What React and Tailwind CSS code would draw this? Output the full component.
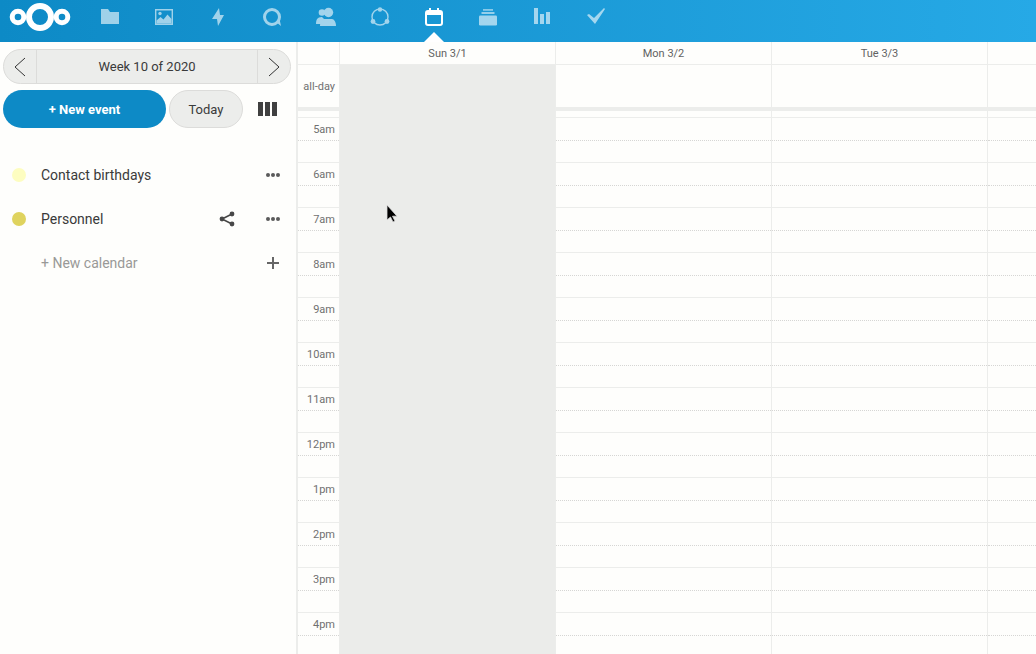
import React from "react";

function Ic({ children, active }) {
  return (
    <div className="w-[54px] h-[42px] pb-[8px] flex items-center justify-center relative">
      <svg width="24" height="24" viewBox="0 0 24 24" fill="#fff" className={active ? "" : "opacity-60"}>
        {children}
      </svg>
      {active && <div className="absolute left-[17px] bottom-0 w-0 h-0 border-l-[10px] border-r-[10px] border-b-[10px] border-l-transparent border-r-transparent border-b-white" />}
    </div>
  );
}

const hours = ["5am","6am","7am","8am","9am","10am","11am","12pm","1pm","2pm","3pm","4pm"];

function Slots({ label }) {
  return (
    <>
      <div className="h-[42px] shrink-0 pt-[2px] flex items-center justify-end pr-[4px] text-[11px] text-[#707070]">{label ? "all-day" : ""}</div>
      <div className="h-[4px] shrink-0 bg-[#ecedeb]" />
      <div className="h-[6px] shrink-0" />
    </>
  );
}

function Rows({ labels }) {
  return hours.map((h) => (
    <div key={h} className="h-[45px] shrink-0 border-t border-[#ecedeb]">
      <div className="h-[23px] border-b border-dotted border-[#d6d6d4] flex items-center justify-end pr-[4px] text-[11px] leading-none text-[#707070]">
        {labels ? h : ""}
      </div>
    </div>
  ));
}

function Day({ title, today }) {
  return (
    <div className="w-[216px] shrink-0 border-r border-[#ecedeb] flex flex-col">
      <div className="h-[23px] shrink-0 pt-[2px] border-b border-[#ecedeb] bg-[#fefefc] flex items-center justify-center text-[11px] text-[#626262]">{title}</div>
      {today ? (
        <div className="flex-1 bg-[#ebecea]" />
      ) : (
        <>
          <Slots />
          <Rows />
        </>
      )}
    </div>
  );
}

function Dots() {
  return (
    <svg width="16" height="16" viewBox="0 0 16 16" fill="#5a5a5a">
      <circle cx="3" cy="8" r="2" /><circle cx="8" cy="8" r="2" /><circle cx="13" cy="8" r="2" />
    </svg>
  );
}

function CalRow({ color, name, share }) {
  return (
    <div className="h-[44px] flex items-center">
      <div className="w-[14px] h-[14px] rounded-full ml-[12px] mr-[15px] shrink-0" style={{ backgroundColor: color }} />
      <div className="flex-1 text-[14px] text-[#3a3a3a]">{name}</div>
      {share && (
        <svg width="16" height="16" viewBox="0 0 16 16" fill="#484848" stroke="#484848" className="mr-[30px]">
          <circle cx="13" cy="3" r="2.4" stroke="none" /><circle cx="3" cy="8" r="2.4" stroke="none" /><circle cx="13" cy="13" r="2.4" stroke="none" />
          <path d="M13 3 3 8l10 5" fill="none" strokeWidth="1.6" />
        </svg>
      )}
      <div className="mr-[15px] flex"><Dots /></div>
    </div>
  );
}

export default function App() {
  return (
    <div className="relative w-[1036px] h-[654px] overflow-hidden flex flex-col bg-[#fefefc] font-['Roboto',sans-serif]">
      <header className="h-[42px] shrink-0 flex bg-gradient-to-r from-[#0d8ac6] to-[#26a9e6]">
        <div className="w-[83px] pb-[8px] flex items-center">
          <svg width="83" height="34" viewBox="0 0 83 34" fill="none" stroke="#fff">
            <circle cx="40" cy="17" r="11" strokeWidth="6" />
            <circle cx="18" cy="17" r="5.8" strokeWidth="5" />
            <circle cx="62" cy="17" r="5.8" strokeWidth="5" />
          </svg>
        </div>
        <Ic><path d="M3 4h7l2 3h9v12H3z" /></Ic>
        <Ic>
          <path d="M3.7 4.7h16.6v14.6H3.7z" fill="none" stroke="#fff" strokeWidth="1.4" />
          <circle cx="8" cy="8.5" r="1.7" />
          <path d="M4.5 18.5v-3l4-3.5 3 2.5 4-5 4 4.5v4.5z" />
        </Ic>
        <Ic><path d="M13 3 6 14h5l1 7 6-11h-4z" /></Ic>
        <Ic>
          <circle cx="12" cy="12" r="7.5" fill="none" stroke="#fff" strokeWidth="3" />
          <path d="M16 17l5 4-1.5-7z" />
        </Ic>
        <Ic>
          <circle cx="8" cy="7.5" r="3.3" />
          <path d="M2 19c0-4 1-7 6-7l2 2v5z" />
          <circle cx="14.5" cy="7.5" r="4.7" />
          <path d="M6 21c0-4 2-7 4-7h8c2 0 4 3 4 7z" />
        </Ic>
        <Ic>
          <circle cx="12" cy="12" r="8" fill="none" stroke="#fff" strokeWidth="1.4" />
          <circle cx="12" cy="4.5" r="2.2" />
          <circle cx="5" cy="16.5" r="2.4" />
          <circle cx="19" cy="16.5" r="2.4" />
        </Ic>
        <Ic active>
          <rect x="4" y="6" width="16" height="14" rx="2" fill="none" stroke="#fff" strokeWidth="2" />
          <path d="M4 6h16v4H4z" />
          <rect x="7" y="3" width="2" height="4" /><rect x="15" y="3" width="2" height="4" />
        </Ic>
        <Ic>
          <path d="M7 4h10v1.8H7z" opacity=".8" />
          <path d="M5.5 7h13v2H5.5z" opacity=".9" />
          <rect x="3" y="10.5" width="18" height="10" rx="1.2" />
        </Ic>
        <Ic><path d="M4 3h4v16H4zM10 9h4v10h-4zM16 7h4v12h-4z" /></Ic>
        <Ic><path d="M3 10l2-1 5 4L20 3l1 1-10 15z" /></Ic>
      </header>

      <div className="flex-1 flex min-h-0">
        <aside className="w-[298px] shrink-0 border-r-2 border-[#ecedeb] flex flex-col">
          <div className="mt-[7px] ml-[3px] w-[288px] h-[35px] flex rounded-full border border-[#dcdcda] bg-[#ecedeb] overflow-hidden text-[#3a3a3a]">
            <div className="w-[33px] border-r border-[#dcdcda] flex items-center justify-center">
              <svg width="14" height="22" viewBox="0 0 14 22" fill="none" stroke="#333" strokeWidth="1"><path d="M12 2 2 11l10 9" /></svg>
            </div>
            <div className="flex-1 flex items-center justify-center text-[13px]">Week 10 of 2020</div>
            <div className="w-[33px] border-l border-[#dcdcda] flex items-center justify-center">
              <svg width="14" height="22" viewBox="0 0 14 22" fill="none" stroke="#333" strokeWidth="1"><path d="M2 2l10 9-10 9" /></svg>
            </div>
          </div>
          <div className="mt-[6px] ml-[3px] flex items-center">
            <div className="w-[163px] h-[38px] pt-[2px] rounded-full bg-[#0d8ac6] text-white text-[13px] font-bold flex items-center justify-center">+ New event</div>
            <div className="ml-[3px] w-[74px] h-[38px] pt-[2px] rounded-full border border-[#dcdcda] bg-[#ecedeb] text-[#3a3a3a] text-[13px] flex items-center justify-center">Today</div>
            <svg width="20" height="14" viewBox="0 0 20 14" fill="#404040" className="ml-[15px]"><path d="M0 0h5v14H0zM7 0h5v14H7zM14 0h5v14h-5z" /></svg>
          </div>
          <div className="mt-[25px]">
            <CalRow color="#fdfdc0" name="Contact birthdays" />
            <CalRow color="#dfd35e" name="Personnel" share />
            <div className="h-[44px] flex items-center">
              <div className="flex-1 pl-[41px] text-[14px] text-[#999997]">+ New calendar</div>
              <svg width="14" height="14" viewBox="0 0 14 14" stroke="#666" strokeWidth="2" className="mr-[16px]"><path d="M7 1v12M1 7h12" /></svg>
            </div>
          </div>
        </aside>

        <main className="flex-1 flex overflow-hidden min-w-0">
          <div className="w-[42px] shrink-0 border-r border-[#ecedeb] flex flex-col">
            <div className="h-[23px] shrink-0 border-b border-[#ecedeb]" />
            <Slots label />
            <Rows labels />
          </div>
          <Day title="Sun 3/1" today />
          <Day title="Mon 3/2" />
          <Day title="Tue 3/3" />
          <div className="flex-1 flex flex-col min-w-0">
            <div className="h-[23px] shrink-0 border-b border-[#ecedeb]" />
            <Slots />
            <Rows />
          </div>
        </main>
      </div>

      <svg width="14" height="20" viewBox="0 0 14 20" className="absolute left-[385px] top-[204px]">
        <path d="M2 1v15l3.5-3 2.5 5 2-1-2.5-4.8H12z" fill="#000" stroke="#ddd" strokeWidth=".8" />
      </svg>
    </div>
  );
}
